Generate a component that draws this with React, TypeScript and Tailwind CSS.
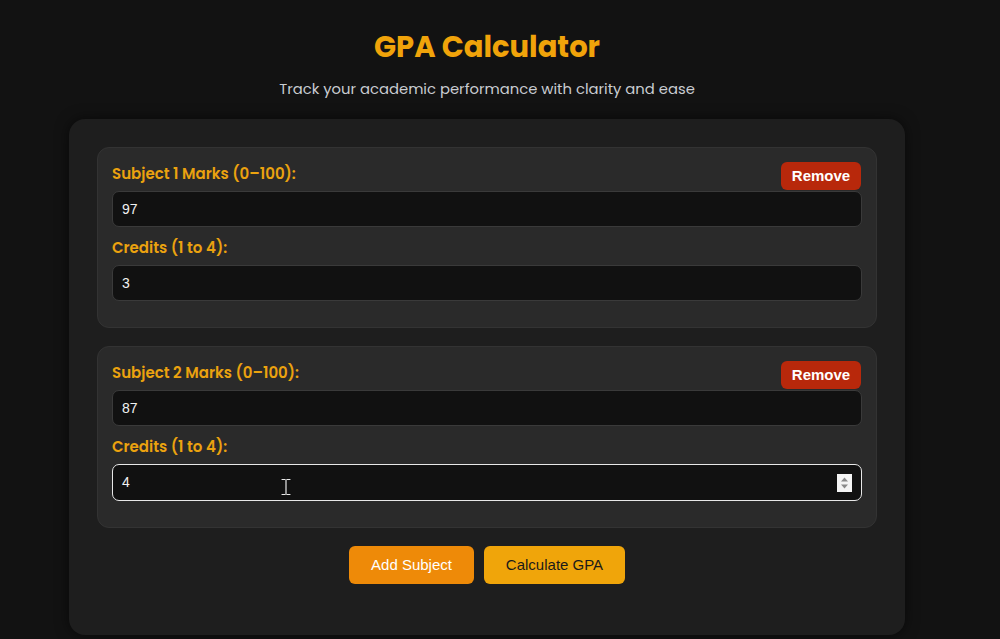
import React from "react";

type Subject = { marks: string; credits: string };

const subjects: Subject[] = [
  { marks: "97", credits: "3" },
  { marks: "87", credits: "4" },
];

const headFont = { fontFamily: '"Poppins", "Noto Sans", "Open Sans", sans-serif' };
const bodyFont = { fontFamily: '"Liberation Sans", Arial, sans-serif' };

function SpinBox() {
  return (
    <svg width="15" height="18" viewBox="0 0 15 18" className="absolute right-[9px] top-1/2 -translate-y-1/2">
      <rect x="0" y="0" width="15" height="18" fill="#f4f4f4" />
      <path d="M4 7.5 L7.5 3.5 L11 7.5 Z" fill="#8a8a8a" />
      <path d="M4 10.5 L7.5 14.5 L11 10.5 Z" fill="#8a8a8a" />
    </svg>
  );
}

function TextCursor() {
  return (
    <svg width="12" height="18" viewBox="0 0 12 18" className="absolute left-[167px] top-[13px] pointer-events-none">
      <path d="M2 1.5 H5 M7 1.5 H10 M6 2 V16 M2 16.5 H5 M7 16.5 H10" stroke="#111" strokeWidth="3" fill="none" strokeLinecap="round" />
      <path d="M2 1.5 H5 M7 1.5 H10 M6 2 V16 M2 16.5 H5 M7 16.5 H10" stroke="#e8e8e8" strokeWidth="1.2" fill="none" strokeLinecap="round" />
    </svg>
  );
}

function Field({ label, value, focused }: { label: string; value: string; focused?: boolean }) {
  return (
    <div className="mb-[10px]">
      <div className="text-[15px] leading-[22px] font-semibold text-[#eba20f] mb-[6px]" style={headFont}>
        {label}
      </div>
      <div
        className={
          "relative rounded-[7px] bg-[#111111] flex items-center pl-[9px] text-[14px] text-[#f1f1f1] " +
          (focused ? "border-[1.5px] border-[#e8e8e8] h-[37px]" : "border border-[#3a3a3a] h-[36px]")
        }
        style={bodyFont}
      >
        {value}
        {focused && (
          <>
            <SpinBox />
            <TextCursor />
          </>
        )}
      </div>
    </div>
  );
}

function SubjectCard({ index, subject, focused }: { index: number; subject: Subject; focused?: boolean }) {
  return (
    <div className="relative rounded-[12px] bg-[#2a2a2a] border border-[#333333] px-[14px] pt-[15px] pb-[16px]">
      <button
        className="absolute top-[14px] right-[15px] w-[80px] h-[28px] rounded-[6px] bg-[#b8280b] text-white text-[15px] font-bold"
        style={bodyFont}
      >
        Remove
      </button>
      <Field label={`Subject ${index} Marks (0–100):`} value={subject.marks} />
      <Field label="Credits (1 to 4):" value={subject.credits} focused={focused} />
    </div>
  );
}

export default function App() {
  return (
    <div className="min-h-[639px] w-full bg-[#121212] overflow-hidden">
      <div className="w-[974px] flex flex-col items-center pt-[25px]">
        <h1 className="text-[29px] leading-[44px] font-bold text-[#f0a30a]" style={headFont}>
          GPA Calculator
        </h1>
        <p className="mt-[8px] text-[14.8px] leading-[24px] text-[#c9ccd1]" style={headFont}>
          Track your academic performance with clarity and ease
        </p>
        <div className="mt-[18px] w-[836px] rounded-[16px] bg-[#1e1e1e] shadow-[0_0_14px_rgba(0,0,0,0.55)] px-[28px] pt-[28px] pb-[51px]">
          <div className="flex flex-col gap-[18px]">
            {subjects.map((s, i) => (
              <SubjectCard key={i} index={i + 1} subject={s} focused={i === 1} />
            ))}
          </div>
          <div className="mt-[18px] flex justify-center gap-[10px] text-[15px]" style={bodyFont}>
            <button className="w-[125px] h-[38px] rounded-[6px] bg-[#ee8a08] text-white">Add Subject</button>
            <button className="w-[141px] h-[38px] rounded-[6px] bg-[#f0a50a] text-[#1a1a1a]">Calculate GPA</button>
          </div>
        </div>
      </div>
    </div>
  );
}
